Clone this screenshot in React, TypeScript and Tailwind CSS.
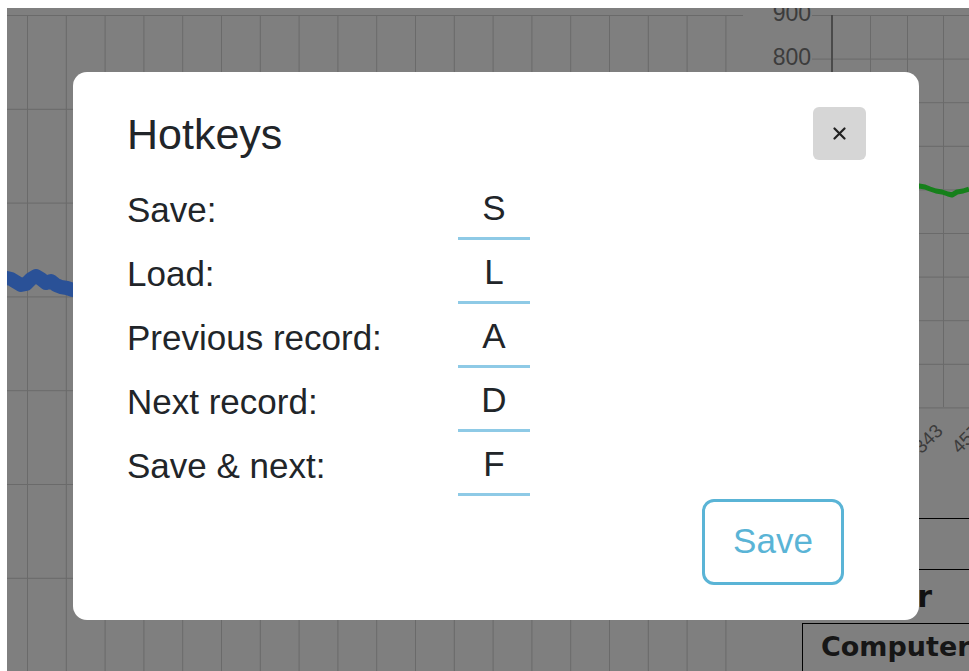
import React from "react";

const hotkeys = [
  { label: "Save:", key: "S" },
  { label: "Load:", key: "L" },
  { label: "Previous record:", key: "A" },
  { label: "Next record:", key: "D" },
  { label: "Save & next:", key: "F" },
];

// Signal trace drawn in the left chart
const bluePoints = [
  [0, 270], [4, 271], [9, 274], [14, 277], [19, 276], [24, 271], [29, 268], [34, 271],
  [39, 275], [44, 273], [49, 277], [54, 279], [60, 280], [66, 282], [74, 284], [90, 286],
]
  .map(([x, y]) => `${x},${y}`)
  .join(" ");

// Trace in the right chart
const greenPoints = [
  [89, 185], [120, 180], [150, 184], [176, 178], [182, 179], [187, 181], [193, 183],
  [199, 184], [205, 186], [209, 187], [214, 184], [220, 183], [226, 181],
]
  .map(([x, y]) => `${x},${y}`)
  .join(" ");

function LeftChart() {
  const vLines = Array.from({ length: 19 }, (_, i) => 20 + i * 38.8);
  const hLines = Array.from({ length: 7 }, (_, i) => 7 + i * 93.8);
  return (
    <svg width={736} height={663} className="block shrink-0">
      {vLines.map((x) => (
        <line key={`v${x}`} x1={x + 0.5} x2={x + 0.5} y1={7} y2={663} stroke="#6a6a6a" strokeWidth={1} />
      ))}
      {hLines.map((y) => (
        <line key={`h${y}`} x1={0} x2={736} y1={y + 0.5} y2={y + 0.5} stroke="#6a6a6a" strokeWidth={1} />
      ))}
      <polyline
        points={bluePoints}
        fill="none"
        stroke="#2a5197"
        strokeWidth={14}
        strokeLinejoin="round"
        strokeLinecap="round"
      />
    </svg>
  );
}

function RightChart() {
  const hLines = Array.from({ length: 10 }, (_, i) => 7 + i * 43.6);
  const vLines = [127, 164, 200];
  const values = ["900", "800", "700", "600", "500", "400", "300", "200", "100", "0"];
  const xTicks = [
    { x: 124, label: "121" },
    { x: 161, label: "232" },
    { x: 201, label: "343" },
    { x: 239, label: "457" },
  ];
  return (
    <svg width={226} height={510} className="block">
      {hLines.map((y, i) => (
        <g key={`h${i}`}>
          <line x1={69} x2={226} y1={y + 0.5} y2={y + 0.5} stroke="#6a6a6a" strokeWidth={1} />
          <text
            x={68}
            y={y + 6}
            textAnchor="end"
            fontSize={23}
            fill="#3c3c3c"
            fontFamily="'Liberation Sans', Arial, sans-serif"
          >
            {values[i]}
          </text>
        </g>
      ))}
      {vLines.map((x) => (
        <line key={`v${x}`} x1={x + 0.5} x2={x + 0.5} y1={7} y2={399} stroke="#6a6a6a" strokeWidth={1} />
      ))}
      <line x1={89} x2={89} y1={7} y2={400} stroke="#4a4a4a" strokeWidth={2} />
      <polyline points={greenPoints} fill="none" stroke="#16801b" strokeWidth={5} strokeLinejoin="round" />
      {xTicks.map((t) => (
        <text
          key={t.label}
          x={t.x}
          y={424}
          textAnchor="end"
          fontSize={19}
          fill="#3c3c3c"
          fontFamily="'Liberation Sans', Arial, sans-serif"
          transform={`rotate(-45 ${t.x} 424)`}
        >
          {t.label}
        </text>
      ))}
    </svg>
  );
}

function HotkeysModal() {
  return (
    <div className="absolute left-[66px] top-[64px] w-[846px] h-[548px] bg-white rounded-[14px] flex flex-col pl-[54px] pr-[53px] pt-[35px] text-[#212529]">
      <div className="flex items-start justify-between">
        <h2 className="mt-[6px] text-[43px] leading-none font-normal">Hotkeys</h2>
        <button className="w-[53px] h-[53px] rounded-[6px] bg-[#d6d6d6] flex items-center justify-center text-[#222]">
          <svg width={13} height={13} viewBox="0 0 13 13">
            <path d="M1.5 1.5 L11.5 11.5 M11.5 1.5 L1.5 11.5" stroke="#222" strokeWidth={2.2} strokeLinecap="round" />
          </svg>
        </button>
      </div>
      <div className="mt-[17px] flex flex-col">
        {hotkeys.map((h) => (
          <div key={h.key} className="flex items-center h-[64px]">
            <span className="w-[331px] text-[35px] leading-none">{h.label}</span>
            <div className="w-[72px] h-[61px] border-b-[3px] border-[#8ecae6] flex items-center justify-center text-[35px] leading-none">
              {h.key}
            </div>
          </div>
        ))}
      </div>
      <div className="mt-[2px] flex justify-end pr-[22px]">
        <button className="w-[142px] h-[86px] border-[3px] border-[#5ab4d6] rounded-[12px] text-[35px] leading-none text-[#5ab4d6] pb-[3px]">
          Save
        </button>
      </div>
    </div>
  );
}

export default function App() {
  return (
    <div className="w-[969px] h-[671px] bg-white pt-[8px] pl-[7px] font-['Liberation_Sans',Arial,sans-serif]">
      <div className="relative w-[962px] h-[663px] overflow-hidden bg-[#7f7f7f] flex">
        <LeftChart />
        <div className="w-[226px] shrink-0 flex flex-col">
          <RightChart />
          <div className="h-[51px] border-t border-black" />
          <div className="h-[54px] border-t border-black flex items-center justify-end pr-[37px]">
            <span className="font-bold text-[30px] leading-none text-[#111] font-['DejaVu_Sans',Verdana,sans-serif]">
              Annotator
            </span>
          </div>
          <div className="flex-1 ml-[59px] border-t border-l border-black pl-[18px] pt-[9px]">
            <span className="font-bold text-[27px] leading-none text-[#161616] whitespace-nowrap font-['DejaVu_Sans',Verdana,sans-serif]">
              Computer
            </span>
          </div>
        </div>
        <HotkeysModal />
      </div>
    </div>
  );
}
